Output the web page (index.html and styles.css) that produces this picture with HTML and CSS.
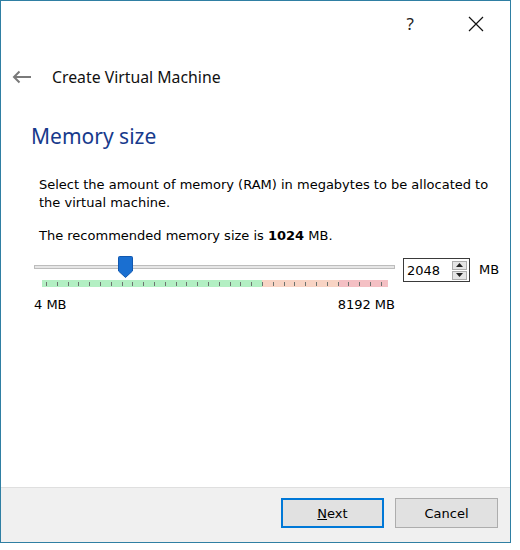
FILE: index.html
```html
<!DOCTYPE html>
<html>
<head>
<meta charset="utf-8">
<link rel="stylesheet" href="styles.css">
</head>
<body>
<div class="window">
  <div class="titlebar">
    <span class="help">?</span>
    <span class="close">
      <svg width="16" height="16" viewBox="0 0 16 16"><path d="M1 1 L15 15 M15 1 L1 15" stroke="#111" stroke-width="1.2" fill="none"/></svg>
    </span>
  </div>
  <div class="header">
    <svg class="back" width="20" height="14" viewBox="0 0 20 14"><path d="M2 7 H19 M7.5 1.5 L2 7 L7.5 12.5" stroke="#7a7a7a" stroke-width="2" fill="none"/></svg>
    <span class="header-title">Create Virtual Machine</span>
  </div>
  <div class="content">
    <h1 class="page-title">Memory size</h1>
    <p class="desc">Select the amount of memory (RAM) in megabytes to be allocated to the virtual machine.</p>
    <p class="rec">The recommended memory size is <b>1024</b> MB.</p>
    <div class="slider-row">
      <div class="slider">
        <div class="track">
          <div class="groove"></div>
          <svg class="handle" width="15" height="22" viewBox="0 0 15 22"><path d="M1.5 0.5 H13.5 Q14.5 0.5 14.5 1.5 V15 L7.5 21.5 L0.5 15 V1.5 Q0.5 0.5 1.5 0.5 Z" fill="#1a6fd1" stroke="#1158b0" stroke-width="1"/></svg>
        </div>
        <div class="scale">
          <div class="zone green"></div>
          <div class="zone peach"></div>
          <div class="zone pink"></div>
        </div>
        <div class="labels"><span>4 MB</span><span>8192 MB</span></div>
      </div>
      <div class="spin">
        <span class="spin-value">2048</span>
        <span class="spin-btns">
          <span class="spin-btn"><svg width="7" height="4" viewBox="0 0 7 4"><path d="M0 4 L3.5 0 L7 4 Z" fill="#222"/></svg></span>
          <span class="spin-btn"><svg width="7" height="4" viewBox="0 0 7 4"><path d="M0 0 L3.5 4 L7 0 Z" fill="#222"/></svg></span>
        </span>
      </div>
      <span class="unit">MB</span>
    </div>
  </div>
  <div class="footer">
    <button class="btn btn-default"><u>N</u>ext</button>
    <button class="btn">Cancel</button>
  </div>
</div>
</body>
</html>
```
FILE: styles.css
```css
html, body {
  margin: 0;
  padding: 0;
  background: #ffffff;
}
.window {
  width: 511px;
  height: 543px;
  box-sizing: border-box;
  border: 1px solid #2f7fa3;
  display: flex;
  flex-direction: column;
  background: #fff;
  font-family: "DejaVu Sans", sans-serif;
  color: #000;
}
.titlebar {
  height: 43px;
  display: flex;
  align-items: center;
  justify-content: flex-end;
  padding-right: 26px;
  gap: 54px;
}
.help {
  font-family: "Noto Sans", sans-serif;
  font-size: 17px;
  color: #222;
  padding-top: 2px;
}
.close {
  display: flex;
  padding-top: 2px;
}
.header {
  height: 66px;
  display: flex;
  align-items: center;
  padding-left: 11px;
}
.back {
  display: block;
  margin-right: 20px;
}
.header-title {
  font-family: "Noto Sans", sans-serif;
  font-size: 15.8px;
  color: #111;
}
.content {
  flex: 1;
  padding-left: 30px;
}
.page-title {
  margin: 11px 0 0 0;
  font-family: "Noto Sans", sans-serif;
  font-weight: normal;
  font-size: 21px;
  line-height: 30px;
  color: #173a8c;
}
.desc {
  margin: 25px 0 0 8px;
  width: 462px;
  font-size: 13px;
  line-height: 18px;
}
.rec {
  margin: 15px 0 0 8px;
  font-size: 13px;
  line-height: 18px;
}
.slider-row {
  margin-top: 11px;
  display: flex;
  align-items: flex-start;
  padding-left: 3px;
}
.slider {
  width: 361px;
}
.track {
  position: relative;
  height: 24px;
}
.groove {
  position: relative;
  top: 9px;
  height: 2px;
  border: 1px solid #bdbdbd;
  background: #e6e6e6;
}
.handle {
  position: absolute;
  left: 84px;
  top: 0;
}
.scale {
  position: relative;
  margin-left: 8px;
  width: 346px;
  height: 7px;
  display: flex;
}
.zone {
  height: 7px;
}
.green { width: 220px; background: #b3efc3; }
.peach { width: 77px; background: #f8d4c4; }
.pink { width: 49px; background: #f4c0c4; }
.scale::after {
  content: "";
  position: absolute;
  left: 0; right: 0; top: 2px; height: 4px;
  background-image: repeating-linear-gradient(90deg, transparent 0, transparent 4px, #6e7470 4px, #6e7470 5px, transparent 5px, transparent 10.8px);
}
.labels {
  margin-top: 10px;
  display: flex;
  justify-content: space-between;
  font-size: 13px;
  line-height: 16px;
}
.spin {
  margin-left: 8px;
  margin-top: 2px;
  width: 67px;
  height: 24px;
  box-sizing: border-box;
  border: 1px solid #3a3a3a;
  display: flex;
  align-items: center;
  justify-content: space-between;
  padding: 0 2px 0 3px;
}
.spin-value {
  font-size: 13px;
}
.spin-btns {
  display: flex;
  flex-direction: column;
  gap: 1px;
}
.spin-btn {
  width: 15px;
  height: 9px;
  box-sizing: border-box;
  border: 1px solid #adadad;
  background: #e5e5e5;
  display: flex;
  align-items: center;
  justify-content: center;
}
.spin-btn svg { display: block; }
.unit {
  margin-left: 9px;
  margin-top: 6px;
  font-size: 13px;
}
.footer {
  height: 55px;
  flex: none;
  border-top: 1px solid #dfdfdf;
  background: #f0f0f0;
  display: flex;
  justify-content: flex-end;
  align-items: flex-start;
  padding: 10px 12px 0 0;
  gap: 11px;
  box-sizing: border-box;
}
.btn {
  width: 103px;
  height: 30px;
  box-sizing: border-box;
  border: 1px solid #adadad;
  background: #e1e1e1;
  font-family: "DejaVu Sans", sans-serif;
  font-size: 13px;
  color: #000;
  padding: 0;
}
.btn-default {
  border: 2px solid #0078d7;
}
```
